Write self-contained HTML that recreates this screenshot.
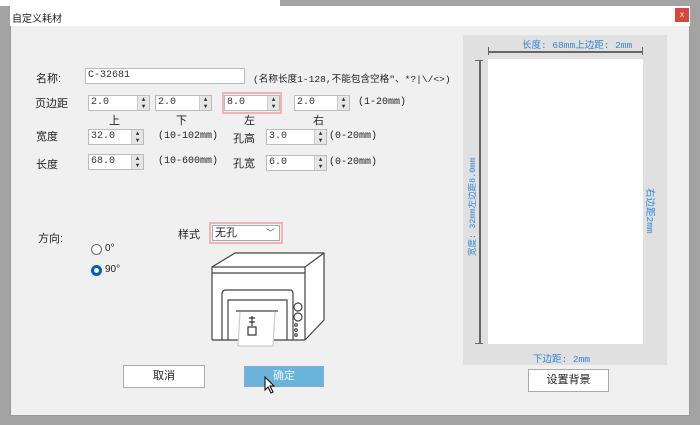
<!DOCTYPE html>
<html><head><meta charset="utf-8"><style>
*{margin:0;padding:0;box-sizing:border-box}
body{width:700px;height:425px;background:#a3a3a3;position:relative;overflow:hidden;font-family:"Liberation Sans","Noto Sans CJK SC",sans-serif;font-size:11px;color:#222}
.a{position:absolute}
.dlg{left:10px;top:6px;width:680px;height:410px;background:#f0f0f0;border:1px solid #999}
.tb{left:10px;top:6px;width:680px;height:20px;background:#fff}
.inp{position:absolute;background:#fff;border:1px solid #bbb;height:16px;font-family:"Liberation Mono",monospace;font-size:10px;padding-left:2px;line-height:14px;color:#333}
.sp{position:absolute;right:0;top:0;width:12px;height:14px;background:#e6e6e6;border-left:1px solid #ccc;font-size:6px;line-height:7px;text-align:center;color:#333}
.hl{position:absolute;border:2px solid #f0b4b8}
.mono{font-family:"Liberation Mono","Noto Sans CJK SC",monospace;font-size:10px}
.blue{color:#2e86d6;font-family:"Liberation Mono","Noto Sans CJK SC",monospace;font-size:10px}
.btn{position:absolute;background:#fff;border:1px solid #aaa;text-align:center;font-size:11px}
</style></head><body>
<div class="a" style="left:0;top:0;width:280px;height:6px;background:#fff"></div>
<div class="a dlg"></div>
<div class="a tb"></div>
<div class="a" style="left:12px;top:10px;font-size:10px">自定义耗材</div>
<div class="a" style="left:675px;top:8px;width:14px;height:14px;background:#d9473b;color:#fff;font-size:8px;text-align:center;line-height:14px">x</div>

<div class="a" style="left:36px;top:70px">名称:</div>
<div class="inp" style="left:85px;top:68px;width:160px">C-32681</div>
<div class="a mono" style="left:253px;top:71px;font-size:9.6px">(名称长度1-128,不能包含空格"、*?|\/&lt;&gt;)</div>

<div class="a" style="left:35px;top:95px">页边距</div>
<div class="inp" style="left:88px;top:95px;width:62px">2.0<div class="sp">▲<br>▼</div></div>
<div class="inp" style="left:155px;top:95px;width:57px">2.0<div class="sp">▲<br>▼</div></div>
<div class="hl" style="left:222px;top:92px;width:60px;height:22px"></div>
<div class="inp" style="left:224px;top:95px;width:56px">8.0<div class="sp">▲<br>▼</div></div>
<div class="inp" style="left:294px;top:95px;width:56px">2.0<div class="sp">▲<br>▼</div></div>
<div class="a mono" style="left:358px;top:97px">(1-20mm)</div>
<div class="a" style="left:109px;top:112px">上</div>
<div class="a" style="left:176px;top:112px">下</div>
<div class="a" style="left:244px;top:112px">左</div>
<div class="a" style="left:313px;top:112px">右</div>

<div class="a" style="left:36px;top:128px">宽度</div>
<div class="inp" style="left:88px;top:129px;width:56px">32.0<div class="sp">▲<br>▼</div></div>
<div class="a mono" style="left:158px;top:131px">(10-102mm)</div>
<div class="a" style="left:233px;top:130px">孔高</div>
<div class="inp" style="left:266px;top:129px;width:61px">3.0<div class="sp">▲<br>▼</div></div>
<div class="a mono" style="left:329px;top:131px">(0-20mm)</div>

<div class="a" style="left:36px;top:156px">长度</div>
<div class="inp" style="left:88px;top:154px;width:56px">68.0<div class="sp">▲<br>▼</div></div>
<div class="a mono" style="left:158px;top:156px">(10-600mm)</div>
<div class="a" style="left:233px;top:155px">孔宽</div>
<div class="inp" style="left:266px;top:155px;width:61px">6.0<div class="sp">▲<br>▼</div></div>
<div class="a mono" style="left:329px;top:157px">(0-20mm)</div>

<div class="a" style="left:38px;top:230px">方向:</div>
<div class="a" style="left:91px;top:244px;width:11px;height:11px;border:1px solid #666;border-radius:50%;background:#fff"></div>
<div class="a" style="left:105px;top:243px;font-size:10px">0°</div>
<div class="a" style="left:91px;top:265px;width:11px;height:11px;border:3px solid #0060c0;border-radius:50%;background:#fff"></div>
<div class="a" style="left:105px;top:264px;font-size:10px">90°</div>
<div class="a" style="left:178px;top:226px">样式</div>
<div class="hl" style="left:209px;top:222px;width:74px;height:22px"></div>
<div class="a" style="left:212px;top:225px;width:68px;height:16px;background:#fff;border:1px solid #aaa;font-size:11px;line-height:14px;padding-left:2px">无孔<span style="position:absolute;right:4px;color:#666;font-size:9px">﹀</span></div>

<svg class="a" style="left:200px;top:250px" width="130" height="100" viewBox="0 0 130 100" fill="none" stroke="#444" stroke-width="1.2">
<path d="M12 90 L12 17 L35 3 L124 3 L124 70 L105 90 Z" fill="#fff" stroke="none"/>
<path d="M12 90 L12 17 L35 3 L124 3 L124 70 L105 90"/>
<path d="M12 17 L105 17 L105 90 M105 17 L124 3"/>
<path d="M12 23 L105 23"/>
<path d="M12 90 L38 90 M73 90 L105 90"/>
<path d="M22 90 L22 44 Q22 40 26 40 L90 40 Q93 40 93 44 L93 90"/>
<path d="M28 90 L28 50 L87 50 L87 90"/>
<path d="M36 61 L78 61"/>
<path d="M40 62 L38 96 L73 96 L75 62" fill="#fff" stroke="#ccc"/>
<circle cx="98" cy="57" r="4"/><circle cx="98" cy="67" r="4"/>
<circle cx="96" cy="75" r="1.3"/><circle cx="96" cy="80" r="1.3"/><circle cx="96" cy="85" r="1.3"/>
<path d="M49 68 L55 68 M52 66 L52 76 M49 72 L55 72" stroke="#333"/>
<rect x="48" y="77" width="8" height="8" stroke="#333"/>
</svg>

<div class="btn" style="left:123px;top:365px;width:82px;height:23px;line-height:21px">取消</div>
<div class="btn" style="left:244px;top:366px;width:80px;height:21px;line-height:19px;background:#6ab3da;border-color:#8ac;color:#e8f4fb">确定</div>
<svg class="a" style="left:264px;top:376px" width="12" height="18" viewBox="0 0 12 18"><path d="M1 1 L1 14 L4 11 L7 17 L9 16 L6 10 L10 10 Z" fill="#fff" stroke="#000" stroke-width="1"/></svg>

<div class="a" style="left:463px;top:35px;width:204px;height:330px;background:#e0e0e0"></div>
<div class="a" style="left:488px;top:59px;width:155px;height:285px;background:#fff"></div>
<div class="a blue" style="left:522px;top:37px;font-size:9.5px">长度: 68mm上边距: 2mm</div>
<div class="a" style="left:488px;top:51px;width:155px;height:2px;background:#666"></div>
<div class="a" style="left:488px;top:47px;width:1px;height:8px;background:#666"></div>
<div class="a" style="left:642px;top:47px;width:1px;height:8px;background:#666"></div>
<div class="a" style="left:479px;top:60px;width:2px;height:284px;background:#666"></div>
<div class="a" style="left:475px;top:60px;width:8px;height:1px;background:#666"></div>
<div class="a" style="left:475px;top:343px;width:8px;height:1px;background:#666"></div>
<div class="a blue" style="left:466px;top:256px;transform:rotate(-90deg);transform-origin:0 0;white-space:nowrap;font-size:8.5px">宽度: 32mm左边距8.0mm</div>
<div class="a blue" style="left:658px;top:188px;transform:rotate(90deg);transform-origin:0 0;white-space:nowrap;font-size:9.5px">右边距2mm</div>
<div class="a blue" style="left:533px;top:351px;font-size:9.5px">下边距: 2mm</div>
<div class="btn" style="left:528px;top:369px;width:81px;height:23px;line-height:21px">设置背景</div>
</body></html>
